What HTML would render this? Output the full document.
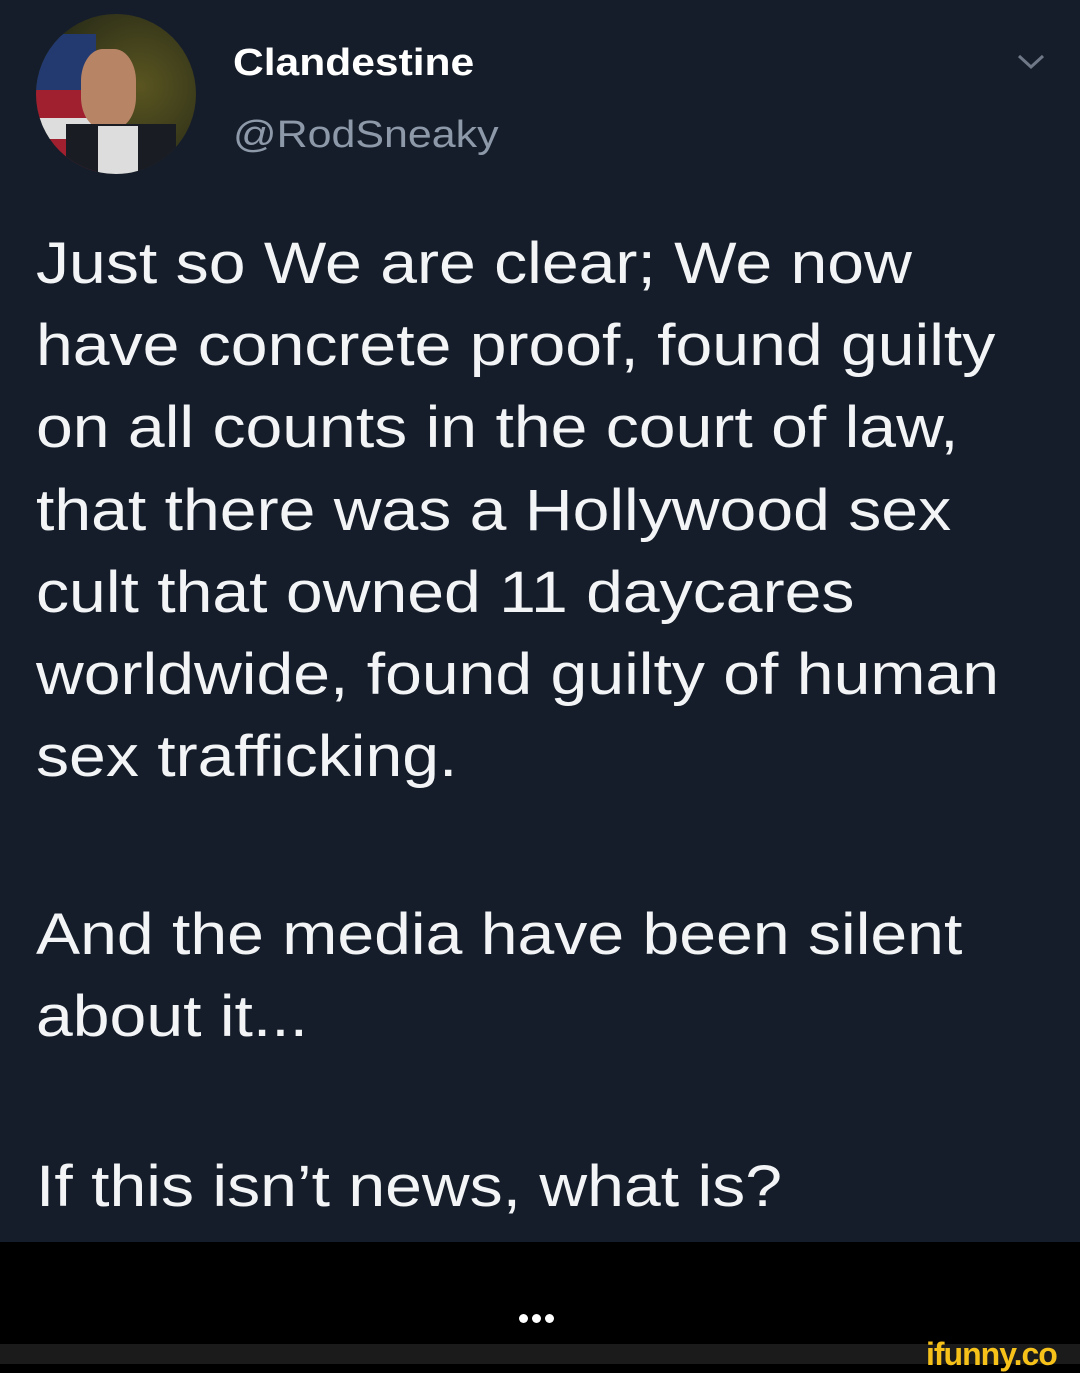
<!DOCTYPE html>
<html><head><style>
body{margin:0;width:1080px;height:1364px;background:#000;position:relative;overflow:hidden;font-family:"Liberation Sans",Arial,sans-serif}
#tw{position:absolute;left:0;top:0;width:1080px;height:1242px;background:#151d2a}
.l{position:absolute;left:36px;color:#f2f4f6;font-size:58px;white-space:nowrap;line-height:1;transform:scaleX(1.14);transform-origin:0 0}
</style></head><body>
<div id="tw">
<div style="position:absolute;left:36px;top:14px;width:160px;height:160px;border-radius:50%;background:radial-gradient(circle at 65% 45%,#5a5520,#2a2d18 70%);overflow:hidden">
<div style="position:absolute;left:0;top:20px;width:60px;height:140px;background:linear-gradient(#233a70 0 40%,#a02030 40% 60%,#ddd 60% 75%,#a02030 75%)"></div>
<div style="position:absolute;left:45px;top:35px;width:55px;height:80px;border-radius:40%;background:#b88466"></div>
<div style="position:absolute;left:30px;top:110px;width:110px;height:60px;background:#1a1c24"></div>
<div style="position:absolute;left:62px;top:112px;width:40px;height:50px;background:#ddd"></div>
</div>
<div style="position:absolute;left:233px;top:42px;color:#fff;font-weight:bold;font-size:38px;transform:scaleX(1.12);transform-origin:0 0">Clandestine</div>
<div style="position:absolute;left:233px;top:114px;color:#8d99a8;font-size:38px;transform:scaleX(1.13);transform-origin:0 0">@RodSneaky</div>
<svg style="position:absolute;left:1016px;top:52px" width="30" height="20"><path d="M3 4 L15 15 L27 4" stroke="#6e7886" stroke-width="3" fill="none"/></svg>
<div class="l" style="top:235px">Just so We are clear; We now</div>
<div class="l" style="top:317px">have concrete proof, found guilty</div>
<div class="l" style="top:399px">on all counts in the court of law,</div>
<div class="l" style="top:482px">that there was a Hollywood sex</div>
<div class="l" style="top:564px">cult that owned 11 daycares</div>
<div class="l" style="top:646px">worldwide, found guilty of human</div>
<div class="l" style="top:728px">sex trafficking.</div>
<div class="l" style="top:906px">And the media have been silent</div>
<div class="l" style="top:988px">about it...</div>
<div class="l" style="top:1158px">If this isn’t news, what is?</div>
</div>
<div style="position:absolute;left:519px;top:1310px">
<span style="display:inline-block;width:9px;height:9px;border-radius:50%;background:#fff;margin-right:4px"></span><span style="display:inline-block;width:9px;height:9px;border-radius:50%;background:#fff;margin-right:4px"></span><span style="display:inline-block;width:9px;height:9px;border-radius:50%;background:#fff"></span></div>
<div style="position:absolute;left:0;top:1344px;width:1080px;height:20px;background:#1b1b1c"></div>
<div style="position:absolute;left:926px;top:1336px;color:#f6c21a;font-weight:bold;font-size:32px;letter-spacing:-1px">ifunny.co</div>
</body></html>
